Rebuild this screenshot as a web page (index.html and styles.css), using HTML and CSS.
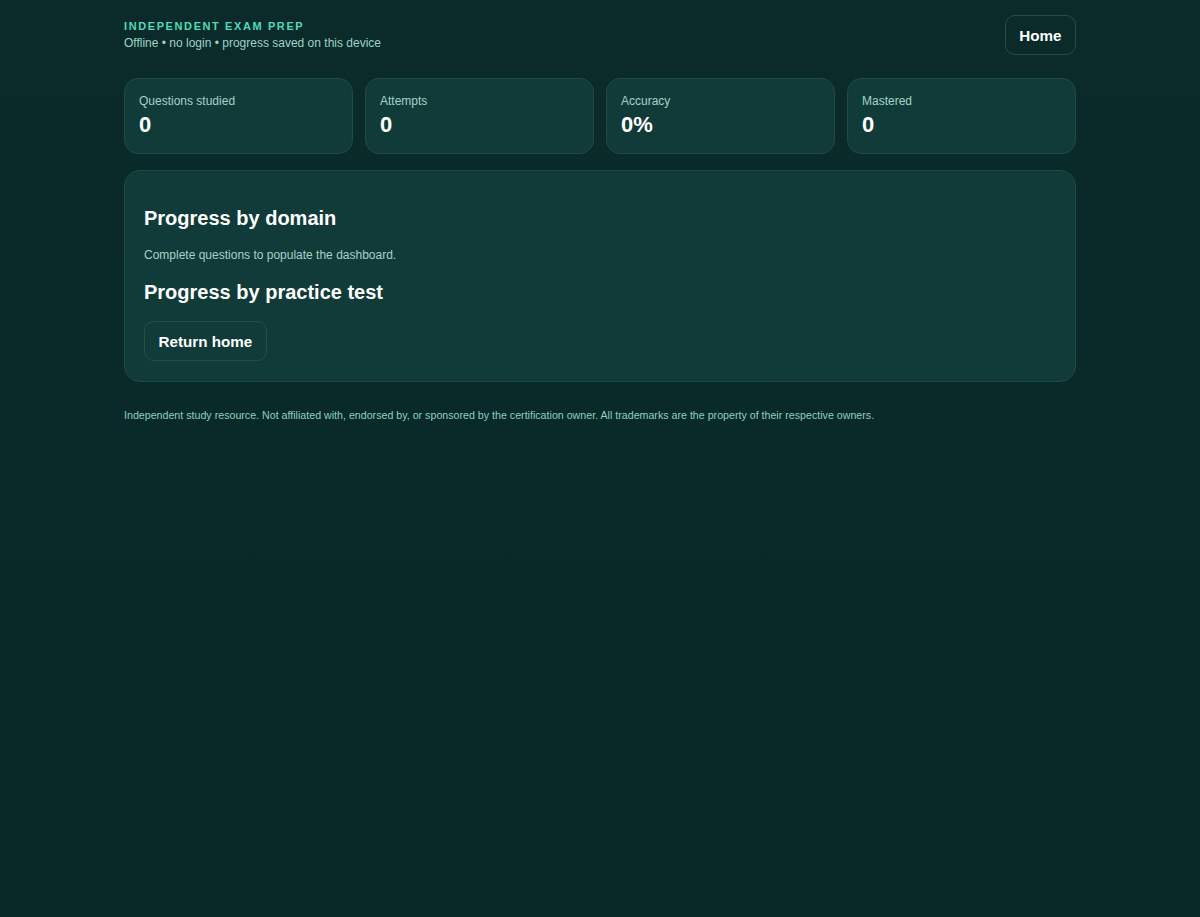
FILE: index.html
```html
<!DOCTYPE html>
<html lang="en">
<head>
<meta charset="utf-8">
<title>Independent Exam Prep</title>
<link rel="stylesheet" href="styles.css">
</head>
<body>
<div class="wrap">
  <header class="top">
    <div class="brand">
      <div class="brand-title">INDEPENDENT EXAM PREP</div>
      <div class="brand-sub">Offline • no login • progress saved on this device</div>
    </div>
    <button class="btn">Home</button>
  </header>

  <section class="stats">
    <div class="stat"><div class="stat-label">Questions studied</div><div class="stat-value">0</div></div>
    <div class="stat"><div class="stat-label">Attempts</div><div class="stat-value">0</div></div>
    <div class="stat"><div class="stat-label">Accuracy</div><div class="stat-value">0%</div></div>
    <div class="stat"><div class="stat-label">Mastered</div><div class="stat-value">0</div></div>
  </section>

  <section class="panel">
    <h2 class="panel-h">Progress by domain</h2>
    <p class="panel-p">Complete questions to populate the dashboard.</p>
    <h2 class="panel-h">Progress by practice test</h2>
    <button class="btn">Return home</button>
  </section>

  <footer class="foot">Independent study resource. Not affiliated with, endorsed by, or sponsored by the certification owner. All trademarks are the property of their respective owners.</footer>
</div>
</body>
</html>
```

FILE: styles.css
```css
html, body {
  margin: 0;
  padding: 0;
}
body {
  background: linear-gradient(180deg, #0a2b29 0%, #062826 100%);
  min-height: 917px;
  font-family: "Liberation Sans", Arial, sans-serif;
  color: #eafff9;
}
.wrap {
  width: 952px;
  margin: 0 auto;
  padding-top: 15px;
}
.top {
  display: flex;
  justify-content: space-between;
  align-items: center;
}
.brand-title {
  font-size: 11px;
  font-weight: 700;
  letter-spacing: 1.6px;
  color: #4fd9bd;
  line-height: 14px;
}
.brand-sub {
  font-size: 12px;
  color: #9fd3c6;
  line-height: 16px;
  margin-top: 2px;
}
.btn {
  height: 40px;
  padding: 0 13.5px;
  background: transparent;
  border: 1px solid #21504a;
  border-radius: 10px;
  color: #ffffff;
  font-family: "Liberation Sans", Arial, sans-serif;
  font-size: 15.2px;
  font-weight: 700;
  cursor: pointer;
}
.stats {
  display: grid;
  grid-template-columns: repeat(4, 1fr);
  gap: 12px;
  margin-top: 23px;
}
.stat {
  background: #113b38;
  border: 1px solid #1f4a46;
  border-radius: 14px;
  padding: 15px 14px 14px;
  height: 76px;
  box-sizing: border-box;
}
.stat-label {
  font-size: 12px;
  line-height: 14px;
  color: #a3d3c8;
}
.stat-value {
  font-size: 22px;
  font-weight: 700;
  line-height: 26px;
  margin-top: 4px;
  color: #ffffff;
}
.panel {
  margin-top: 16px;
  background: #113b38;
  border: 1px solid #1f4a46;
  border-radius: 16px;
  padding: 19px 19px 20px;
}
.panel-h {
  font-size: 20px;
  line-height: 24px;
  font-weight: 700;
  margin: 16px 0;
  color: #ffffff;
}
.panel-h + .btn {
  margin-top: 1px;
}
.panel-p {
  font-size: 12px;
  line-height: 18px;
  margin: 0;
  color: #a3d3c8;
}
.foot {
  margin-top: 26px;
  font-size: 10.66px;
  line-height: 14px;
  color: #8fcfc0;
}
```
